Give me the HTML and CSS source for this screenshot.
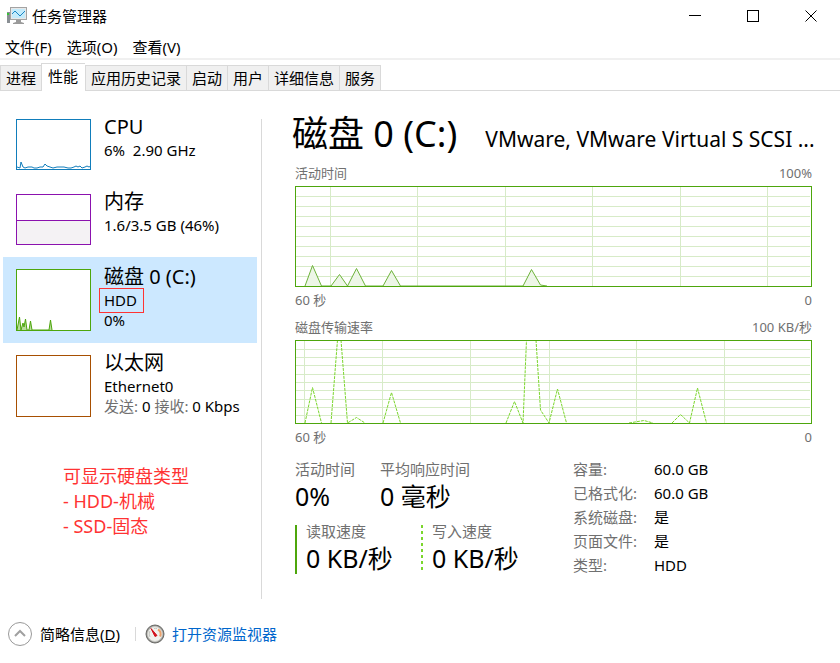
FILE: index.html
```html
<!DOCTYPE html>
<html lang="zh-CN">
<head>
    <meta charset="UTF-8">
    <meta name="viewport" content="width=device-width, initial-scale=1.0">
    <title>任务管理器</title>
    <link rel="stylesheet" href="styles.css">
</head>
<body>

<header class="title-bar">
    <svg class="app-icon" width="20" height="18" viewBox="0 0 20 18">
        <rect x="0" y="5" width="3" height="11" fill="#8a8f94"/>
        <rect x="0" y="6" width="2" height="2" fill="#35c435"/>
        <path d="M9 13h5v2l3 1v1H6v-1l3-1z" fill="#9a9a9a"/>
        <rect x="3.5" y="0.5" width="16" height="12" fill="#e8e8e8" stroke="#a3a3a3"/>
        <rect x="5" y="2" width="13" height="9" fill="#c4ebfb"/>
        <path d="M5 7l3-3 5 5 5-5" fill="none" stroke="#1b86c4"/>
    </svg>
    <span class="title-text">任务管理器</span>
    <button class="window-btn" aria-label="最小化">
        <svg width="12" height="12" viewBox="0 0 12 12"><path d="M0 5.5h12"/></svg>
    </button>
    <button class="window-btn" aria-label="最大化">
        <svg width="12" height="12" viewBox="0 0 12 12"><rect x="0.5" y="0.5" width="11" height="11"/></svg>
    </button>
    <button class="window-btn" aria-label="关闭">
        <svg width="12" height="12" viewBox="0 0 12 12"><path d="M0.5 0.5l11 11M11.5 0.5l-11 11"/></svg>
    </button>
</header>

<nav class="menu-bar">
    <button>文件(F)</button>
    <button>选项(O)</button>
    <button>查看(V)</button>
</nav>

<div class="tabs" role="tablist">
    <button class="tab" role="tab">进程</button>
    <button class="tab active" role="tab" aria-selected="true">性能</button>
    <button class="tab" role="tab">应用历史记录</button>
    <button class="tab" role="tab">启动</button>
    <button class="tab" role="tab">用户</button>
    <button class="tab" role="tab">详细信息</button>
    <button class="tab" role="tab">服务</button>
</div>

<div class="content">
    <aside class="sidebar">
        <button class="resource">
            <svg class="thumb cpu" viewBox="0 0 75 51" preserveAspectRatio="none">
                <path class="line" d="M1 48l3 1 1-6 2 5 2 1 3-1h4l2 1h3l3-1h3l2-3 2 2 3 1 3 1 4-1h7l4 1h3l3-1 2-1 2 1 2-1 2 2 3-1 2-1 2 1 2-1 3-1"/>
                <rect class="frame" x="0.5" y="0.5" width="74" height="50"/>
            </svg>
            <span class="resource-text">
                <span class="resource-name">CPU</span>
                <span>6%&nbsp; 2.90 GHz</span>
            </span>
        </button>
        <button class="resource">
            <svg class="thumb memory" viewBox="0 0 75 51" preserveAspectRatio="none">
                <path class="area" d="M0 26.5h75V51H0z"/>
                <path class="line" d="M0 26.5h75"/>
                <rect class="frame" x="0.5" y="0.5" width="74" height="50"/>
            </svg>
            <span class="resource-text">
                <span class="resource-name">内存</span>
                <span>1.6/3.5 GB (46%)</span>
            </span>
        </button>
        <button class="resource selected">
            <svg class="thumb disk tall" viewBox="0 0 75 62" preserveAspectRatio="none">
                <path class="line area" d="M1 61l2.500-13 1.500 13 2-7 1 4 1.500-8 1.500 11h2l1.500-9 1.500 9h17l1.500-10 1.500 10"/>
                <rect class="frame" x="0.5" y="0.5" width="74" height="61"/>
            </svg>
            <span class="resource-text">
                <span class="resource-name">磁盘 0 (C:)</span>
                <span class="disk-type">HDD</span>
                <span>0%</span>
            </span>
        </button>
        <button class="resource">
            <svg class="thumb ethernet tall" viewBox="0 0 75 62" preserveAspectRatio="none">
                <rect class="frame" x="0.5" y="0.5" width="74" height="61"/>
            </svg>
            <span class="resource-text">
                <span class="resource-name">以太网</span>
                <span>Ethernet0</span>
                <span><span class="muted">发送:</span> 0 <span class="muted">接收:</span> 0 Kbps</span>
            </span>
        </button>
        <p class="note">可显示硬盘类型<br>- HDD-机械<br>- SSD-固态</p>
    </aside>

    <main class="details">
        <div class="heading">
            <h1>磁盘 0 (C:)</h1>
            <span class="model">VMware, VMware Virtual S SCSI ...</span>
        </div>

        <div class="chart-label"><span>活动时间</span><span>100%</span></div>
        <svg class="chart" height="101" viewBox="0 0 517 101" preserveAspectRatio="none">
            <path class="grid" d="M1 10.500H515M1 20.500H515M1 30.500H515M1 40.500H515M1 50.500H515M1 60.500H515M1 70.500H515M1 80.500H515M1 90.500H515M35.500 1V100M122.500 1V100M210.500 1V100M297.500 1V100M385.500 1V100M472.500 1V100"/>
            <path class="active-time" d="M10 100L17.500 79.500 26.500 100H36L44.500 88.500 52.500 100 61.500 82.500 70.500 100H88L96.500 84.500 105.500 100H228L236.500 83.500 245.500 99 252 100"/>
            <rect class="frame" x="0.5" y="0.5" width="516" height="100"/>
        </svg>
        <div class="chart-label axis"><span>60 秒</span><span>0</span></div>

        <div class="chart-label"><span>磁盘传输速率</span><span>100 KB/秒</span></div>
        <svg class="chart" height="84" viewBox="0 0 517 84" preserveAspectRatio="none">
            <path class="grid" d="M1 9.500H515M1 17.500H515M1 25.500H515M1 34.500H515M1 42.500H515M1 50.500H515M1 59.500H515M1 67.500H515M1 75.500H515M9.500 1V83M87.500 1V83M175.500 1V83M254.500 1V83M341.500 1V83M429.500 1V83"/>
            <path class="transfer" d="M10 83L17.500 47.500 26.500 83M36 83L42.500 0M46 0L52.500 83 61.500 77.500 70 83M88 83L96.500 52.500 105.500 83M211 83L219.500 61.500 228 83 231.500 0M241 0L245.500 70 254 83 262.500 49 271.500 83M334 83L349 80.500 358 83M377 83L385.500 74.500 394.500 83 402.500 48 411.500 83"/>
            <rect class="frame" x="0.5" y="0.5" width="516" height="83"/>
        </svg>
        <div class="chart-label axis"><span>60 秒</span><span>0</span></div>

        <div class="stats">
            <div class="stats-left">
                <dl class="stat-row">
                    <div><dt>活动时间</dt><dd>0%</dd></div>
                    <div><dt>平均响应时间</dt><dd>0 毫秒</dd></div>
                </dl>
                <dl class="speed-row">
                    <div class="speed read"><dt>读取速度</dt><dd>0 KB/秒</dd></div>
                    <div class="speed write"><dt>写入速度</dt><dd>0 KB/秒</dd></div>
                </dl>
            </div>
            <table class="info">
                <tr><th scope="row">容量:</th><td>60.0 GB</td></tr>
                <tr><th scope="row">已格式化:</th><td>60.0 GB</td></tr>
                <tr><th scope="row">系统磁盘:</th><td>是</td></tr>
                <tr><th scope="row">页面文件:</th><td>是</td></tr>
                <tr><th scope="row">类型:</th><td>HDD</td></tr>
            </table>
        </div>
    </main>
</div>

<footer class="footer">
    <button class="fewer">
        <svg width="24" height="24" viewBox="0 0 24 24">
            <circle cx="12" cy="12" r="11.5" fill="#fff" stroke="#999"/>
            <path d="M7 14l5-5 5 5" fill="none" stroke="#a0a0a0" stroke-width="2"/>
        </svg>
        <span>简略信息(<u>D</u>)</span>
    </button>
    <a class="monitor" href="#">
        <svg width="20" height="20" viewBox="0 0 20 20">
            <circle cx="10" cy="10" r="9" fill="#8a8a86" stroke="#6b6b68"/>
            <circle cx="10" cy="10" r="7.500" fill="#f1f1ec" stroke="#c8c8c4"/>
            <path d="M5 13a6 6 0 0 1 0-6M9 4.500a6 6 0 0 1 3 0" fill="none" stroke="#c4c4c0"/>
            <path d="M13 5.500a5 5 0 0 1 2 7" fill="none" stroke="#e9a06c" stroke-width="2"/>
            <path d="M6 4.500l6 7-2 1z" fill="#d3121c" stroke="#d3121c"/>
        </svg>
        <span>打开资源监视器</span>
    </a>
</footer>

</body>
</html>
```
FILE: styles.css
```css
* {
    box-sizing: border-box;
}

body {
    font-family: "Noto Sans", "Noto Sans CJK SC", sans-serif;
    font-size: 15px;
    line-height: 20px;
    color: #000;
    background-color: #fff;
    margin: 0;
    min-height: 100vh;
    display: flex;
    flex-direction: column;
}

button {
    font: inherit;
    color: inherit;
    background: none;
    border: none;
    padding: 0;
    text-align: left;
    white-space: nowrap;
}

dl,
dd,
h1,
p {
    margin: 0;
}

.title-bar {
    display: flex;
    align-items: center;
    height: 32px;
    padding-left: 7px;
}

.title-text {
    flex: 1;
    margin-left: 5px;
}

.window-btn {
    display: flex;
    align-items: center;
    justify-content: center;
    width: 58px;
    height: 32px;
}

.window-btn svg {
    fill: none;
    stroke: #000;
}

.menu-bar {
    display: flex;
    gap: 15px;
    height: 28px;
    padding: 3px 5px 0;
    border-bottom: 2px solid #f0f0f0;
}

.tabs {
    display: flex;
    align-items: flex-end;
    height: 31px;
    border-bottom: 1px solid #d9d9d9;
}

.tab {
    height: 25px;
    padding: 0 5px;
    background: #f0f0f0;
    border-top: 1px solid #d9d9d9;
    border-left: 1px solid #d9d9d9;
}

.tab:last-child {
    border-right: 1px solid #d9d9d9;
}

.tab.active {
    height: 28px;
    margin-bottom: -1px;
    padding: 0 7px 3px 6px;
    background: #fff;
}

.content {
    flex: 1;
    display: flex;
}

.sidebar {
    width: 262px;
    flex-shrink: 0;
    display: flex;
    flex-direction: column;
    padding: 16px 5px 0 3px;
    background: linear-gradient(#d9d9d9, #d9d9d9) right 28px / 1px 480px no-repeat;
}

.resource {
    display: flex;
    align-items: flex-start;
    gap: 13px;
    padding: 7px 9px 12px 13px;
}

.resource.selected {
    background-color: #cce8ff;
}

.resource-text {
    display: flex;
    flex-direction: column;
    align-items: flex-start;
}

.resource-name {
    font-size: 20px;
    line-height: 26px;
}

.thumb {
    width: 75px;
    height: 51px;
    margin-top: 5px;
    flex-shrink: 0;
    background: #fff;
}

.thumb.tall {
    height: 62px;
}

.frame,
.line {
    fill: none;
    stroke: currentColor;
}

.cpu {
    color: #117dbb;
}

.memory {
    color: #8b12ae;
}

.memory .area {
    fill: #f4f2f4;
}

.disk {
    color: #4da60c;
}

.disk .area {
    fill: #b8dc9d;
}

.ethernet {
    color: #a74f01;
}

.disk-type {
    position: relative;
}

/* red marker around the disk type */
.disk-type::after {
    content: "";
    position: absolute;
    inset: -2px -7px -3px -5px;
    border: 1px solid #f33;
}

.muted {
    color: #707070;
}

.note {
    margin: 35px 0 0 60px;
    font-size: 18px;
    line-height: 25px;
    color: #f33;
}

.details {
    flex: 1;
    min-width: 0;
    padding: 20px 28px 0 33px;
}

.heading {
    display: flex;
    align-items: baseline;
    gap: 28px;
    height: 49px;
    margin-left: -3px;
}

h1 {
    font-size: 36px;
    font-weight: normal;
    line-height: 46px;
    white-space: nowrap;
}

.model {
    font-size: 21px;
    white-space: nowrap;
}

.chart-label {
    display: flex;
    justify-content: space-between;
    font-size: 13px;
    line-height: 26px;
    color: #707070;
}

.chart-label.axis {
    line-height: 27px;
}

.chart {
    display: block;
    width: 100%;
    color: #4da60c;
}

.chart .grid {
    fill: none;
    stroke: #d7ebc8;
}

.chart .active-time {
    fill: #edf6e7;
    stroke: #6db33a;
}

.chart .transfer {
    fill: none;
    stroke: #7bd62d;
    stroke-dasharray: 3 1;
}

.stats {
    display: flex;
    padding-top: 6px;
}

.stats-left {
    width: 278px;
    padding-top: 2px;
}

.stat-row,
.speed-row {
    display: flex;
    white-space: nowrap;
}

.stat-row {
    gap: 25px;
}

dt {
    color: #707070;
    line-height: 20px;
}

dd {
    font-size: 25px;
    line-height: 34px;
}

.speed-row {
    margin-top: 8px;
}

.speed {
    width: 126px;
    padding-left: 11px;
}

.speed.read {
    background: linear-gradient(#4da60c, #4da60c) 0 4px / 2px 49px no-repeat;
}

.speed.write {
    background: repeating-linear-gradient(#7bd62d 0 3px, transparent 3px 6px) 0 4px / 2px 45px no-repeat;
}

.info {
    align-self: flex-start;
    border-collapse: collapse;
    line-height: 24px;
}

.info th {
    width: 81px;
    padding: 0;
    font-weight: normal;
    text-align: left;
    color: #707070;
}

.info td {
    padding: 0;
}

.footer {
    display: flex;
    align-items: center;
    height: 58px;
    padding: 0 8px;
}

.fewer,
.monitor {
    display: flex;
    align-items: center;
}

.fewer {
    gap: 8px;
}

.monitor {
    gap: 7px;
    margin-left: 15px;
    padding-left: 10px;
    color: #0066cc;
    text-decoration: none;
    background: linear-gradient(#d9d9d9, #d9d9d9) left center / 1px 14px no-repeat;
}
```
